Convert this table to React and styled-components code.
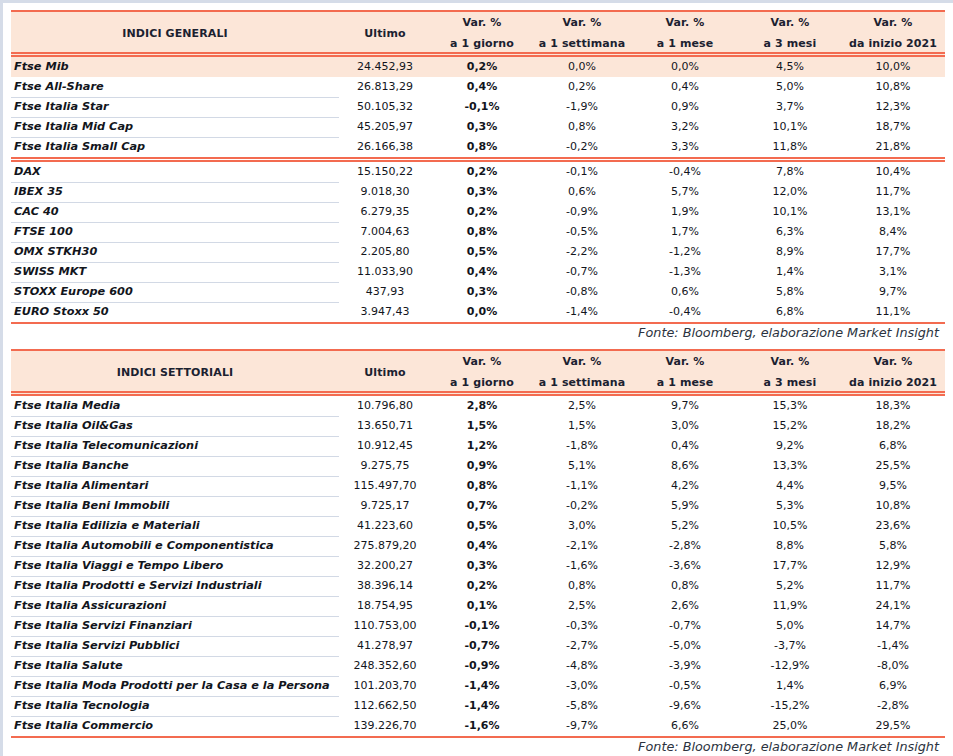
import styled, { createGlobalStyle } from "styled-components";

const GlobalStyle = createGlobalStyle`
    html, body {
        margin: 0;
        padding: 0;
        background: #ffffff;
    }
    body {
        font-family: "DejaVu Sans", "Liberation Sans", sans-serif;
        color: #12151c;
    }
`;

const ORANGE = "#f36b50";
const PEACH = "#fce6d8";
const COLS = "328px 92px 102px 98px 108px 102px 104px";

const Frame = styled.div`
    width: 953px;
    height: 756px;
    box-sizing: border-box;
    border-top: 3px solid #d5dce8;
    border-left: 3px solid #d5dce8;
    padding: 7px 0 0 8px;
    overflow: hidden;
`;

const Section = styled.section`
    width: 934px;
    margin-bottom: ${(p) => p.$gap || 0}px;
`;

const Table = styled.div`
    border-top: 2px solid ${ORANGE};
    border-bottom: 2px solid ${ORANGE};
`;

const HeaderRow = styled.div`
    display: grid;
    grid-template-columns: ${COLS};
    height: 40px;
    background: ${PEACH};
    border-bottom: 5px double ${ORANGE};
    font-size: 11px;
    font-weight: bold;
    color: #1b2130;
`;

const HeadCell = styled.div`
    display: flex;
    flex-direction: column;
    align-items: center;
    justify-content: ${(p) => (p.$single ? "center" : "flex-start")};
    line-height: 21px;
    letter-spacing: 0.1px;
`;

const Group = styled.div`
    border-bottom: ${(p) => (p.$split ? `5px double ${ORANGE}` : "none")};
`;

const Row = styled.div`
    display: grid;
    grid-template-columns: ${COLS};
    height: 20px;
    line-height: 20px;
    font-size: 11px;
    background: ${(p) => (p.$hi ? PEACH : "transparent")};
`;

const NameCell = styled.div`
    box-sizing: border-box;
    padding-left: 3px;
    font-size: 11.3px;
    font-weight: bold;
    font-style: italic;
    white-space: nowrap;
    border-bottom: 1px solid ${(p) => (p.$line ? "#d2d9e5" : "transparent")};
`;

const NumCell = styled.div`
    text-align: center;
    font-weight: ${(p) => (p.$bold ? "bold" : "normal")};
    white-space: nowrap;
`;

const Source = styled.div`
    text-align: right;
    padding-right: 6px;
    font-style: italic;
    font-size: 12.8px;
    line-height: 17px;
    color: #2b3340;
`;

const generali = [
    [
        ["Ftse Mib", "24.452,93", "0,2%", "0,0%", "0,0%", "4,5%", "10,0%"],
        ["Ftse All-Share", "26.813,29", "0,4%", "0,2%", "0,4%", "5,0%", "10,8%"],
        ["Ftse Italia Star", "50.105,32", "-0,1%", "-1,9%", "0,9%", "3,7%", "12,3%"],
        ["Ftse Italia Mid Cap", "45.205,97", "0,3%", "0,8%", "3,2%", "10,1%", "18,7%"],
        ["Ftse Italia Small Cap", "26.166,38", "0,8%", "-0,2%", "3,3%", "11,8%", "21,8%"],
    ],
    [
        ["DAX", "15.150,22", "0,2%", "-0,1%", "-0,4%", "7,8%", "10,4%"],
        ["IBEX 35", "9.018,30", "0,3%", "0,6%", "5,7%", "12,0%", "11,7%"],
        ["CAC 40", "6.279,35", "0,2%", "-0,9%", "1,9%", "10,1%", "13,1%"],
        ["FTSE 100", "7.004,63", "0,8%", "-0,5%", "1,7%", "6,3%", "8,4%"],
        ["OMX STKH30", "2.205,80", "0,5%", "-2,2%", "-1,2%", "8,9%", "17,7%"],
        ["SWISS MKT", "11.033,90", "0,4%", "-0,7%", "-1,3%", "1,4%", "3,1%"],
        ["STOXX Europe 600", "437,93", "0,3%", "-0,8%", "0,6%", "5,8%", "9,7%"],
        ["EURO Stoxx 50", "3.947,43", "0,0%", "-1,4%", "-0,4%", "6,8%", "11,1%"],
    ],
];

const settoriali = [
    [
        ["Ftse Italia Media", "10.796,80", "2,8%", "2,5%", "9,7%", "15,3%", "18,3%"],
        ["Ftse Italia Oil&Gas", "13.650,71", "1,5%", "1,5%", "3,0%", "15,2%", "18,2%"],
        ["Ftse Italia Telecomunicazioni", "10.912,45", "1,2%", "-1,8%", "0,4%", "9,2%", "6,8%"],
        ["Ftse Italia Banche", "9.275,75", "0,9%", "5,1%", "8,6%", "13,3%", "25,5%"],
        ["Ftse Italia Alimentari", "115.497,70", "0,8%", "-1,1%", "4,2%", "4,4%", "9,5%"],
        ["Ftse Italia Beni Immobili", "9.725,17", "0,7%", "-0,2%", "5,9%", "5,3%", "10,8%"],
        ["Ftse Italia Edilizia e Materiali", "41.223,60", "0,5%", "3,0%", "5,2%", "10,5%", "23,6%"],
        ["Ftse Italia Automobili e Componentistica", "275.879,20", "0,4%", "-2,1%", "-2,8%", "8,8%", "5,8%"],
        ["Ftse Italia Viaggi e Tempo Libero", "32.200,27", "0,3%", "-1,6%", "-3,6%", "17,7%", "12,9%"],
        ["Ftse Italia Prodotti e Servizi Industriali", "38.396,14", "0,2%", "0,8%", "0,8%", "5,2%", "11,7%"],
        ["Ftse Italia Assicurazioni", "18.754,95", "0,1%", "2,5%", "2,6%", "11,9%", "24,1%"],
        ["Ftse Italia Servizi Finanziari", "110.753,00", "-0,1%", "-0,3%", "-0,7%", "5,0%", "14,7%"],
        ["Ftse Italia Servizi Pubblici", "41.278,97", "-0,7%", "-2,7%", "-5,0%", "-3,7%", "-1,4%"],
        ["Ftse Italia Salute", "248.352,60", "-0,9%", "-4,8%", "-3,9%", "-12,9%", "-8,0%"],
        ["Ftse Italia Moda Prodotti per la Casa e la Persona", "101.203,70", "-1,4%", "-3,0%", "-0,5%", "1,4%", "6,9%"],
        ["Ftse Italia Tecnologia", "112.662,50", "-1,4%", "-5,8%", "-9,6%", "-15,2%", "-2,8%"],
        ["Ftse Italia Commercio", "139.226,70", "-1,6%", "-9,7%", "6,6%", "25,0%", "29,5%"],
    ],
];

const periods = ["a 1 giorno", "a 1 settimana", "a 1 mese", "a 3 mesi", "da inizio 2021"];

const IndexTable = ({ title, groups, highlightFirst, gap }) => (
    <Section $gap={gap}>
        <Table>
            <HeaderRow>
                <HeadCell $single>{title}</HeadCell>
                <HeadCell $single>Ultimo</HeadCell>
                {periods.map((p) => (
                    <HeadCell key={p}>
                        <span>Var. %</span>
                        <span>{p}</span>
                    </HeadCell>
                ))}
            </HeaderRow>
            {groups.map((rows, gi) => (
                <Group key={gi} $split={gi < groups.length - 1}>
                    {rows.map((r, i) => {
                        const hi = highlightFirst && gi === 0 && i === 0;
                        const last = i === rows.length - 1;
                        return (
                            <Row key={r[0]} $hi={hi}>
                                <NameCell $line={!hi && !last}>{r[0]}</NameCell>
                                {r.slice(1).map((v, ci) => (
                                    <NumCell key={ci} $bold={ci === 1}>
                                        {v}
                                    </NumCell>
                                ))}
                            </Row>
                        );
                    })}
                </Group>
            ))}
        </Table>
        <Source>Fonte: Bloomberg, elaborazione Market Insight</Source>
    </Section>
);

export default function App() {
    return (
        <>
            <GlobalStyle />
            <Frame>
                <IndexTable title="INDICI GENERALI" groups={generali} highlightFirst gap={8} />
                <IndexTable title="INDICI SETTORIALI" groups={settoriali} />
            </Frame>
        </>
    );
}
